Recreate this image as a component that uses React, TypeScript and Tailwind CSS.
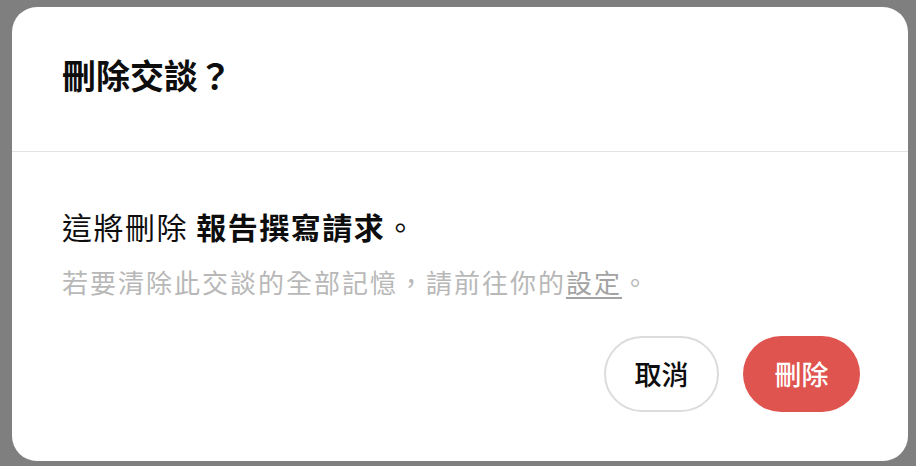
import React from "react";

const font = { fontFamily: '"Noto Sans CJK TC", "Noto Sans", sans-serif' };

const DeleteDialog: React.FC = () => {
  return (
    <div className="w-[896px] h-[454px] bg-white rounded-[25px] overflow-hidden flex flex-col">
      <div className="h-[145px] shrink-0 flex items-center px-[50px] pb-[9px] border-b border-[#e3e3e3]">
        <h2 className="text-[34px] leading-[40px] font-bold text-[#0d0d0d]">
          刪除交談？
        </h2>
      </div>
      <div className="flex-1 flex flex-col pl-[50px] pr-[48px] pt-[54px]">
        <p className="text-[30px] leading-[40px] text-[#0d0d0d] tracking-[1.5px]">
          這將刪除 <span className="font-bold">報告撰寫請求</span>。
        </p>
        <p className="mt-[18px] text-[26px] leading-[36px] text-[#b8b8b8] tracking-[2px]">
          若要清除此交談的全部記憶，請前往你的
          <a href="#" className="underline underline-offset-[4px] text-[#a3a3a3]">
            設定
          </a>
          。
        </p>
        <div className="mt-[36px] flex justify-end gap-[24px]">
          <button className="h-[76px] w-[115px] rounded-full border-2 border-[#dcdcdc] bg-white text-[27px] font-medium text-[#0d0d0d]">
            取消
          </button>
          <button className="h-[76px] w-[117px] rounded-full bg-[#e0544f] text-[27px] font-medium text-white">
            刪除
          </button>
        </div>
      </div>
    </div>
  );
};

export default function App() {
  return (
    <div className="w-[916px] h-[466px] bg-[#7f7f7f] pl-[12px] pt-[7px]" style={font}>
      <DeleteDialog />
    </div>
  );
}
